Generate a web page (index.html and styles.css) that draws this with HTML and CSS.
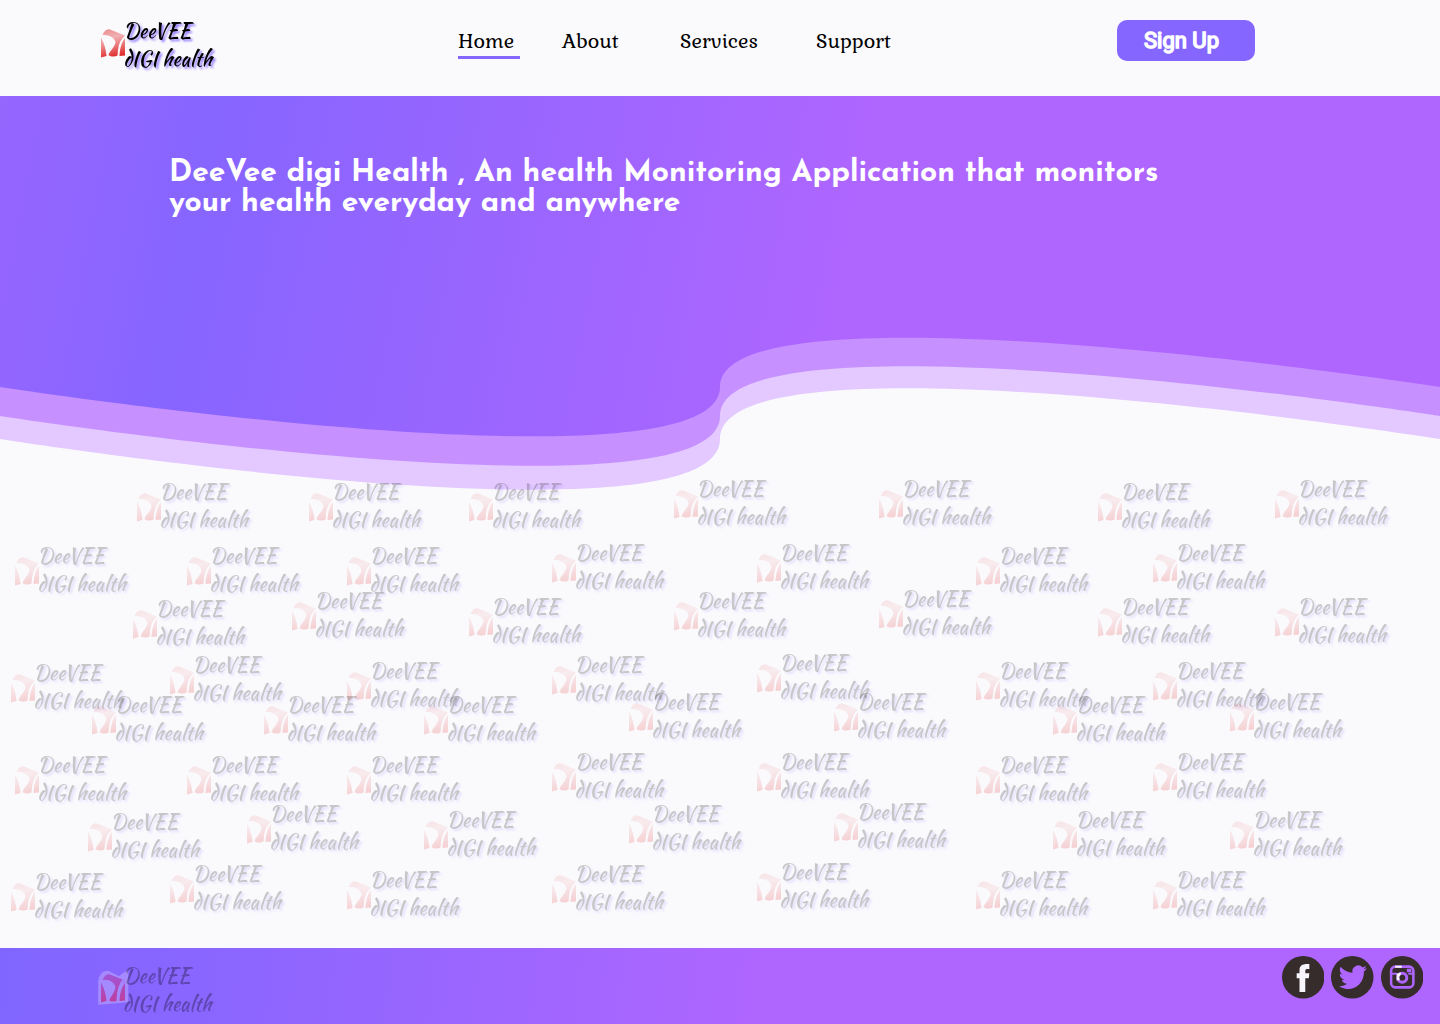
FILE: index.html
```html
<!DOCTYPE html>
<html lang="en">
<head>
<meta charset="utf-8">
<title>DeeVEE DIGI health</title>
<link rel="stylesheet" href="styles.css">
</head>
<body>
<svg class="defs" aria-hidden="true">
  <defs>
    <linearGradient id="red" x1="0.3" y1="0" x2="0.5" y2="1">
      <stop offset="0" stop-color="#e02828" stop-opacity="0.5"/>
      <stop offset="0.3" stop-color="#e02828" stop-opacity="0.35"/>
      <stop offset="0.6" stop-color="#e02828" stop-opacity="0.6"/>
      <stop offset="1" stop-color="#e02828"/>
    </linearGradient>
    <linearGradient id="plum" x1="0.3" y1="0" x2="0.4" y2="1">
      <stop offset="0" stop-color="#a055d8"/>
      <stop offset="1" stop-color="#bd3f9f"/>
    </linearGradient>
    <path id="mark" d="M0 8.500C2 12 5 19 5.500 27L0 28.500zM1.500 6C3 2 6-.5 9 .5L24 6.500C20 10 17.500 15 17 21L16.500 26.500C14 28 10 28 7.500 26C8.500 22 14 18 14.500 13 13.500 8.500 8 5.500 1.500 6zM24 9V26.500L18.500 27C18.800 20 20.500 13 24 9z"/>
    <g id="words">
      <text x="22.500" y="20.500">DeeVEE</text>
      <text x="22.500" y="49">dIGI health</text>
    </g>
    <g id="brand">
      <use href="#mark" y="15" fill="url(#red)"/>
      <use href="#words" class="shadowed"/>
    </g>
  </defs>
</svg>

<header class="topbar">
  <svg class="logo" viewBox="0 0 120 60">
    <use href="#mark" y="12" fill="url(#red)"/>
    <use href="#words" class="shadowed"/>
  </svg>
  <nav class="nav">
    <a class="active">Home</a>
    <a>About</a>
    <a>Services</a>
    <a>Support</a>
  </nav>
  <button class="signup">Sign Up</button>
</header>

<main class="page">
  <section class="hero">
    <h1>DeeVee digi Health , An health Monitoring Application that monitors your health everyday and anywhere</h1>
  </section>
  <svg class="scene" viewBox="0 96 1440 852">
    <defs>
      <linearGradient id="sky" gradientUnits="userSpaceOnUse" x1="-20" y1="205" x2="843" y2="370">
        <stop offset="0" stop-color="#9666ff"/>
        <stop offset="0.24" stop-color="#8765ff"/>
        <stop offset="1" stop-color="#af66ff"/>
      </linearGradient>
    </defs>
    <path fill="#e3c9ff" d="M0 96V439C0 439 720 553 720 439C720 325 1440 439 1440 439V96z"/>
    <path fill="#c690ff" d="M0 96V416C0 416 720 528 720 416C720 304 1440 416 1440 416V96z"/>
    <path fill="url(#sky)" d="M0 96V387C0 387 720 498 720 387C720 276 1440 387 1440 387V96z"/>
    <g class="watermarks" id="watermarks"></g>
  </svg>
</main>

<footer class="footer">
  <svg class="footer-logo" viewBox="0 0 120 60">
    <path class="outline" d="M-.5 41.500V19C.5 12 5 9 9 10.500l10 5 8-5.500V39z"/>
    <use href="#mark" x="1" y="12" fill="url(#plum)"/>
    <path class="seams" d="M1.500 19C9 18 13 20 14 25.500 14 31 9 34 8 39M2 19c3 6 6 13 6 20M17.500 39C18 30 19 22 25 16"/>
    <use href="#words" x="0.500"/>
  </svg>
  <div class="social">
    <svg viewBox="0 0 42 42"><circle cx="21" cy="21" r="21" fill="#352c2b"/><path fill="#f8f4fb" d="M17.300 35.500V22H14.500V17h2.800v-2.800C17.300 9.500 20 7.600 27 8v5c-3.300-.3-4 .2-4 2v2h4l-.5 5H23v13.500z"/></svg>
    <svg viewBox="0 0 42 42"><circle cx="21" cy="21" r="21" fill="#352c2b"/><path fill="#af66ff" d="M35.500 12.200a11 11 0 0 1-3.300.9 5.700 5.700 0 0 0 2.500-3.100 11 11 0 0 1-3.600 1.300 5.700 5.700 0 0 0-9.800 5.200A16.300 16.300 0 0 1 9.500 10.600a5.700 5.700 0 0 0 1.800 7.700 6 6 0 0 1-2.600-.7 5.700 5.700 0 0 0 4.600 5.700 6 6 0 0 1-2.600.1 5.700 5.700 0 0 0 5.400 4A11.600 11.600 0 0 1 8 29.800C19 36.800 32.700 30 32.600 15.300a11 11 0 0 0 2.900-3.100z"/></svg>
    <svg viewBox="0 0 42 42"><circle cx="21" cy="21" r="21" fill="#352c2b"/><rect x="10" y="10.500" width="22" height="20.500" rx="4" fill="none" stroke="#af66ff" stroke-width="2.500"/><path fill="#af66ff" d="M9.500 16.500H16V18.500H9.500zM27 16.500h6v2h-6zM25.500 12.500h4.500v3.500h-4.500z"/><circle cx="21" cy="21.500" r="4.500" fill="none" stroke="#af66ff" stroke-width="3"/><path fill="#f8f4fb" d="M14 9.700h6.500v2H14zM15.500 17.500l4-1.500v2.500l-1.500 2 .5 3.500h-3z"/></svg>
  </div>
</footer>
<script src="script.js"></script>
</body>
</html>
```
FILE: styles.css
```css
* { box-sizing: border-box; }
body {
  margin: 0;
  width: 1440px;
  height: 1024px;
  overflow: hidden;
  display: flex;
  flex-direction: column;
  background: #fafafd;
}
.defs { position: absolute; width: 0; height: 0; }
text { font: 20px "Kaushan Script", Lato, sans-serif; }
.shadowed { filter: drop-shadow(2px 2px 1px rgba(133, 102, 255, 0.9)); }

.topbar {
  height: 96px;
  display: grid;
  grid-template-columns: 357px 659px 138px;
  padding: 17px 0 0 101px;
  align-items: start;
}
.logo { width: 120px; height: 60px; overflow: visible; }
.nav {
  display: grid;
  grid-template-columns: 104px 118px 136px 90px;
  justify-items: start;
  padding-top: 9px;
  font: 22px/28px Kurale, "Liberation Serif", serif;
  color: #000;
  white-space: nowrap;
}
.nav a { height: 33px; }
.nav .active { width: 62px; border-bottom: 3px solid #8566ff; }
.signup {
  width: 138px;
  height: 41px;
  margin-top: 3px;
  padding: 0 0 0 27px;
  border: 0;
  border-radius: 10px;
  background: #8566ff;
  color: #fff;
  font: 400 22px/41px Roboto, sans-serif;
  text-align: left;
  -webkit-text-stroke: 1.5px #fff;
}

.page { height: 852px; display: grid; }
.hero, .scene { grid-area: 1 / 1; }
.hero { z-index: 1; padding: 63px 0 0 169px; }
.scene { width: 1440px; height: 852px; }
h1 {
  width: 1060px;
  margin: 0;
  color: #fff;
  font: 700 30px/30px "Josefin Sans", Lato, sans-serif;
}
.watermarks use { opacity: 0.2; }

.footer {
  height: 76px;
  display: flex;
  justify-content: space-between;
  padding: 8px 17px 0 100px;
  background: linear-gradient(98deg, #8066ff 0, #8966ff 200px, #af66ff 770px);
}
.footer-logo { width: 120px; height: 60px; margin-top: 6px; overflow: visible; }
.footer-logo use[href="#words"] { opacity: 0.3; }
.outline { fill: #a58aff; stroke: #a58aff; stroke-width: 2.5; }
.seams { fill: none; stroke: #a58aff; stroke-width: 2; }
.social { display: flex; gap: 7px; }
.social svg { width: 42.500px; height: 42.500px; }
```
FILE: script.js
```js
// Each row holds the [x, y] origins of its watermark logos.
const rows = [
  [[137, 478], [309, 478], [469, 478], [674, 475], [879, 475], [1098, 478], [1275, 475]],
  [[15, 542], [187, 542], [347, 542], [552, 539], [757, 539], [976, 542], [1153, 539]],
  [[133, 595], [292, 587], [469, 593], [674, 587], [879, 585], [1098, 593], [1275, 593]],
  [[11, 659], [170, 651], [347, 657], [552, 651], [757, 649], [976, 657], [1153, 657]],
  [[92, 691], [264, 691], [424, 691], [629, 688], [834, 688], [1053, 691], [1230, 688]],
  [[15, 751], [187, 751], [347, 751], [552, 748], [757, 748], [976, 751], [1153, 748]],
  [[88, 808], [247, 800], [424, 806], [629, 800], [834, 798], [1053, 806], [1230, 806]],
  [[11, 868], [170, 860], [347, 866], [552, 860], [757, 858], [976, 866], [1153, 866]],
];
const layer = document.getElementById("watermarks");
for (const [x, y] of rows.flat()) {
  const mark = document.createElementNS("http://www.w3.org/2000/svg", "use");
  mark.setAttribute("href", "#brand");
  mark.setAttribute("x", x);
  mark.setAttribute("y", y);
  layer.append(mark);
}
```
